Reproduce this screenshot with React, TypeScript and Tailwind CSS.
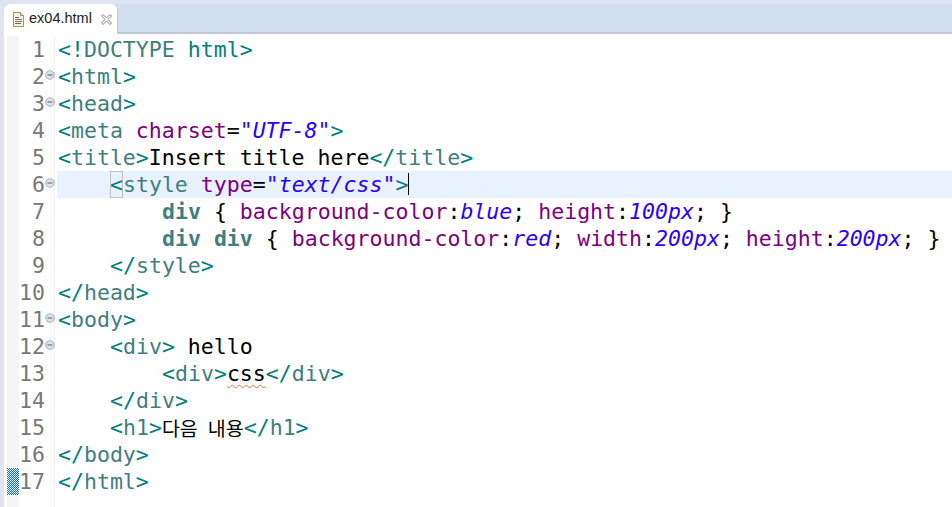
const T = "text-[#3f7f7f]";
const P = "text-[#008080]";
const A = "text-[#7f007f]";
const V = "text-[#2a00ff] italic";

type Seg = [string, string?];

const tag = (open: string, name: string, close = ">"): Seg[] => [
  [open, P],
  [name, T],
  [close, P],
];

const lines: { segs: Seg[]; fold?: boolean; current?: boolean; indent?: number }[] = [
  { segs: [["<!", P], ["DOCTYPE", T], [" "], ["html", "text-[#008080]"], [">", P]] },
  { segs: tag("<", "html"), fold: true },
  { segs: tag("<", "head"), fold: true },
  {
    segs: [
      ["<", P],
      ["meta", T],
      [" "],
      ["charset", A],
      ["=", "text-black"],
      ['"UTF-8"', V],
      [">", P],
    ],
  },
  { segs: [...tag("<", "title"), ["Insert title here", "text-black"], ...tag("</", "title")] },
  {
    segs: [
      ["<", P],
      ["style", T],
      [" "],
      ["type", A],
      ["=", "text-black"],
      ['"text/css"', V],
      [">", P],
    ],
    indent: 4,
    fold: true,
    current: true,
  },
  {
    segs: [
      ["div", "text-[#3f7f7f] font-bold"],
      [" { ", "text-black"],
      ["background-color", A],
      [":", "text-black"],
      ["blue", V],
      ["; ", "text-black"],
      ["height", A],
      [":", "text-black"],
      ["100px", V],
      ["; }", "text-black"],
    ],
    indent: 8,
  },
  {
    segs: [
      ["div div", "text-[#3f7f7f] font-bold"],
      [" { ", "text-black"],
      ["background-color", A],
      [":", "text-black"],
      ["red", V],
      ["; ", "text-black"],
      ["width", A],
      [":", "text-black"],
      ["200px", V],
      ["; ", "text-black"],
      ["height", A],
      [":", "text-black"],
      ["200px", V],
      ["; }", "text-black"],
    ],
    indent: 8,
  },
  { segs: tag("</", "style"), indent: 4 },
  { segs: tag("</", "head") },
  { segs: tag("<", "body"), fold: true },
  { segs: [...tag("<", "div"), [" hello", "text-black"]], indent: 4, fold: true },
  { segs: [...tag("<", "div"), ["css", "SPELL"], ...tag("</", "div")], indent: 8 },
  { segs: tag("</", "div"), indent: 4 },
  { segs: [...tag("<", "h1"), ["다음 내용", "KO"], ...tag("</", "h1")], indent: 4 },
  { segs: tag("</", "body") },
  { segs: tag("</", "html") },
];

function FileIcon() {
  return (
    <svg width="13" height="15" viewBox="0 0 13 15" className="shrink-0">
      <path d="M1.5 0.5H8.5L11.5 3.5V14.5H1.5Z" fill="#fbf3d8" stroke="#a89468" />
      <path d="M8.5 0.5V3.5H11.5" fill="#e6d8a8" stroke="#a89468" />
      <path d="M3 5.5H7" stroke="#b04a4a" />
      <path d="M3 7.5H10" stroke="#4a7ab8" />
      <path d="M3 9.5H10" stroke="#d0603a" />
      <path d="M3 11.5H9" stroke="#3a70b0" />
    </svg>
  );
}

function CloseIcon() {
  return (
    <svg width="11" height="11" viewBox="0 0 11 11" className="shrink-0">
      <path
        d="M0.5 2L2 0.5L5.5 4L9 0.5L10.5 2L7 5.5L10.5 9L9 10.5L5.5 7L2 10.5L0.5 9L4 5.5Z"
        fill="#ffffff"
        stroke="#808080"
        strokeWidth="1"
      />
    </svg>
  );
}

function FoldIcon() {
  return (
    <svg width="10" height="10" viewBox="0 0 10 10">
      <circle cx="5" cy="5" r="4.3" fill="#dde2e8" stroke="#a8b2bc" />
      <path d="M2.5 5H7.5" stroke="#56616c" />
    </svg>
  );
}

function RulerMark() {
  return (
    <svg width="12" height="27" className="block">
      <defs>
        <pattern id="dither" width="2" height="2" patternUnits="userSpaceOnUse">
          <rect width="2" height="2" fill="#ffffff" />
          <rect width="1" height="1" fill="#0a6fd8" />
          <rect x="1" y="1" width="1" height="1" fill="#0a6fd8" />
        </pattern>
      </defs>
      <rect width="12" height="27" fill="url(#dither)" />
    </svg>
  );
}

export default function App() {
  return (
    <div className="w-[952px] h-[507px] overflow-hidden bg-[#e0e4f2] pt-[4px] pl-[4px] flex flex-col">
      <div className="h-[30px] shrink-0 flex bg-[#d1dfef] border-b-2 border-[#c2c8da]">
        <div className="h-[30px] w-[114px] shrink-0 bg-white border-r border-[#c4cbd6] rounded-tr-[6px] rounded-tl-[6px] flex items-center pl-[8px] gap-[4px]">
          <FileIcon />
          <span className="text-[14.5px] text-[#222] font-['Liberation_Sans',sans-serif]">
            ex04.html
          </span>
          <span className="ml-[5px] flex">
            <CloseIcon />
          </span>
        </div>
      </div>
      <div className="flex-1 bg-white pl-[3px] flex flex-col min-h-0 pt-[2px]">
        {lines.map((l, i) => (
          <div
            key={i}
            className="flex h-[27px] items-center shrink-0 font-['DejaVu_Sans_Mono','Noto_Sans_CJK_KR',monospace] text-[21.55px] leading-[27px] whitespace-pre"
          >
            <div className="w-[12px] h-full shrink-0 bg-[#f5f5f5]">{i === 16 && <RulerMark />}</div>
            <div className="w-[26px] h-full shrink-0 relative text-right text-[#787878]">
              {i + 1}
              {l.fold && (
                <span className="absolute left-[26px] top-[7px] flex">
                  <FoldIcon />
                </span>
              )}
            </div>
            <div className="w-[9px] h-full shrink-0" />
            <div className="w-[3px] h-full shrink-0 border-l border-[#f0f0f0]" />
            <div className={`flex-1 h-full min-w-0 flex pl-[1px] ${l.current ? "bg-[#e8f2fe]" : ""}`}>
              <span style={{ width: (l.indent ?? 0) * 13 }} className="shrink-0" />
              {l.segs.map(([text, cls], j) =>
                cls === "SPELL" ? (
                  <span
                    key={j}
                    className="text-black underline decoration-wavy decoration-[#e8743a] decoration-[1px] underline-offset-[3px]"
                  >
                    {text}
                  </span>
                ) : cls === "KO" ? (
                  <span key={j} className="text-black text-[19.5px] font-['Noto_Sans_CJK_KR',sans-serif] flex">
                    <span>다음</span>
                    <span className="w-[10px]" />
                    <span>내용</span>
                  </span>
                ) : (
                  <span
                    key={j}
                    className={`${cls ?? ""} ${
                      text === "<" && l.current ? "outline outline-1 -outline-offset-1 outline-[#c0c0c0]" : ""
                    }`}
                  >
                    {text}
                  </span>
                ),
              )}
              {l.current && <span className="w-[1px] h-[22px] mt-[2px] bg-black" />}
            </div>
          </div>
        ))}
        <div className="flex flex-1">
          <div className="w-[12px] shrink-0 bg-[#f5f5f5]" />
          <div className="w-[35px] shrink-0" />
          <div className="w-[3px] shrink-0 border-l border-[#f0f0f0]" />
        </div>
      </div>
    </div>
  );
}
